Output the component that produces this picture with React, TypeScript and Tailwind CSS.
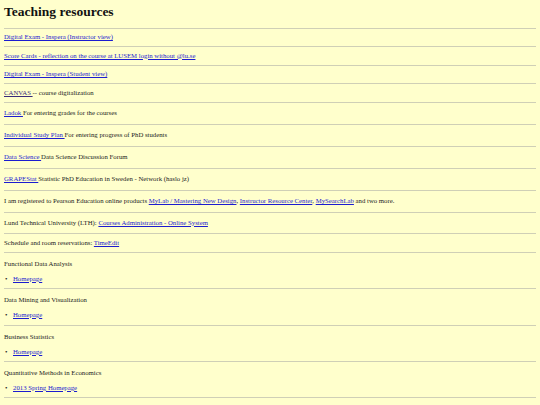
import React from 'react';

const link = 'text-[#1c1cd0] underline underline-offset-[1px]';

type Row = { h: string; body: React.ReactNode };

const rows: Row[] = [
  { h: 'h-[17px]', body: <a className={link}>Digital Exam - Inspera (Instructor view)</a> },
  { h: 'h-[18px]', body: <a className={link}>Score Cards - reflection on the course at LUSEM login without @lu.se</a> },
  { h: 'h-[17px]', body: <a className={link}>Digital Exam - Inspera (Student view)</a> },
  {
    h: 'h-[18px]',
    body: (
      <>
        <a className="text-[#3a2a7a] underline underline-offset-[1px]">CANVAS </a> -- course digitalization
      </>
    ),
  },
  {
    h: 'h-[21px]',
    body: (
      <>
        <a className={link}>Ladok </a>For entering grades for the courses
      </>
    ),
  },
  {
    h: 'h-[21px]',
    body: (
      <>
        <a className={link}>Individual Study Plan </a>For entering progress of PhD students
      </>
    ),
  },
  {
    h: 'h-[21px]',
    body: (
      <>
        <a className={link}>Data Science </a>Data Science Discussion Forum
      </>
    ),
  },
  {
    h: 'h-[21px]',
    body: (
      <>
        <a className={link}>GRAPEStat </a>Statistic PhD Education in Sweden - Network (haslo jz)
      </>
    ),
  },
  {
    h: 'h-[21px]',
    body: (
      <>
        I am registered to Pearson Education online products <a className={link}>MyLab / Mastering New Design</a>,{' '}
        <a className={link}>Instructor Resource Center</a>, <a className={link}>MySearchLab</a> and two more.
      </>
    ),
  },
  {
    h: 'h-[20px]',
    body: (
      <>
        Lund Technical University (LTH): <a className={link}>Courses Administration - Online System</a>
      </>
    ),
  },
  {
    h: 'h-[18px]',
    body: (
      <>
        Schedule and room reservations: <a className={link}>TimeEdit</a>
      </>
    ),
  },
];

const courses = [
  { name: 'Functional Data Analysis', link: 'Homepage', h: 'h-[35px]' },
  { name: 'Data Mining and Visualization', link: 'Homepage', h: 'h-[36px]' },
  { name: 'Business Statistics', link: 'Homepage', h: 'h-[35px]' },
  { name: 'Quantitative Methods in Economics', link: '2013 Spring Homepage', h: 'h-[35px]' },
];

function Rule() {
  return <div className="h-px bg-[#cfcfb6] mr-[4px]" />;
}

export default function App() {
  return (
    <div className="w-[540px] h-[405px] overflow-hidden bg-[#ffffcc] pl-[4px] text-[#222] font-['Liberation_Serif',serif] text-[6.75px] leading-none">
      <div className="h-[28px] pt-[5px]">
        <h1 className="text-[13.5px] font-bold leading-none text-[#111]">Teaching resources</h1>
      </div>
      <Rule />
      {rows.map((r, i) => (
        <React.Fragment key={i}>
          <div className={`${r.h} flex items-center`}>
            <p>{r.body}</p>
          </div>
          <Rule />
        </React.Fragment>
      ))}
      {courses.map((c, i) => (
        <React.Fragment key={i}>
          <div className={`${c.h} flex flex-col pt-[8px] gap-[8px]`}>
            <p>{c.name}</p>
            <div className="flex items-center">
              <span className="w-[9px] pl-[1px] text-[7px]">•</span>
              <a className={link}>{c.link}</a>
            </div>
          </div>
          <Rule />
        </React.Fragment>
      ))}
    </div>
  );
}
